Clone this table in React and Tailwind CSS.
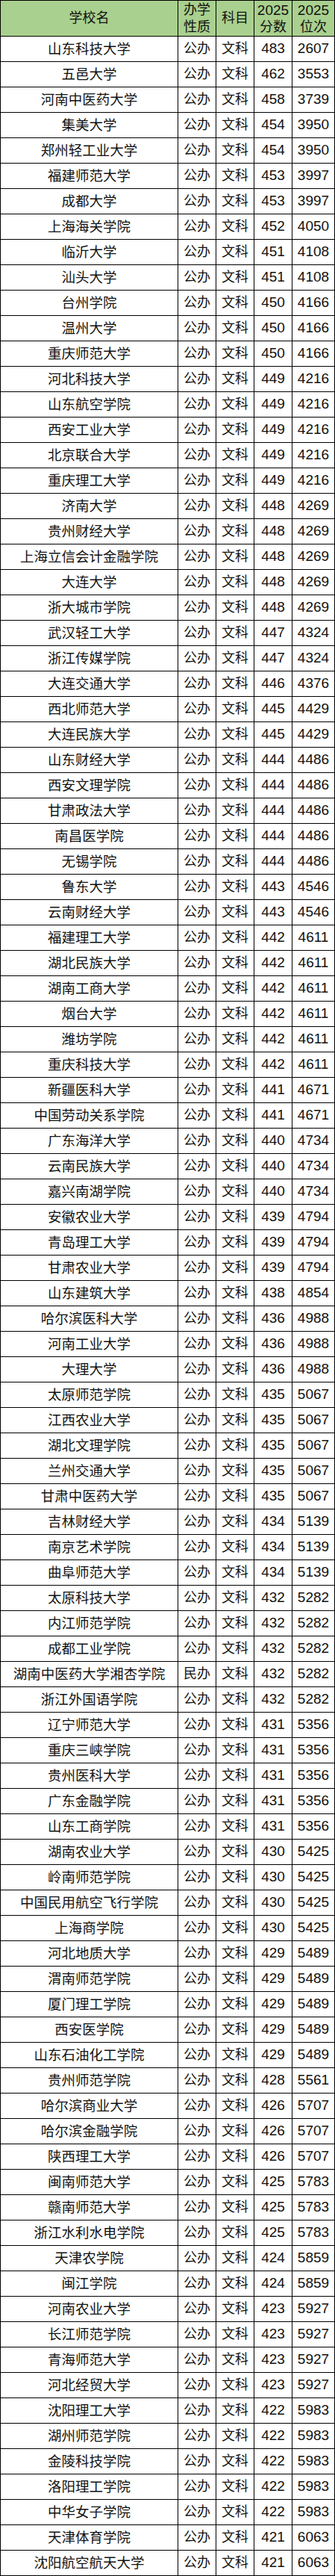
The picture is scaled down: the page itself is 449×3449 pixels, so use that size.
import React from "react";

const rows = [
  ["山东科技大学", "公办", 483, 2607],
  ["五邑大学", "公办", 462, 3553],
  ["河南中医药大学", "公办", 458, 3739],
  ["集美大学", "公办", 454, 3950],
  ["郑州轻工业大学", "公办", 454, 3950],
  ["福建师范大学", "公办", 453, 3997],
  ["成都大学", "公办", 453, 3997],
  ["上海海关学院", "公办", 452, 4050],
  ["临沂大学", "公办", 451, 4108],
  ["汕头大学", "公办", 451, 4108],
  ["台州学院", "公办", 450, 4166],
  ["温州大学", "公办", 450, 4166],
  ["重庆师范大学", "公办", 450, 4166],
  ["河北科技大学", "公办", 449, 4216],
  ["山东航空学院", "公办", 449, 4216],
  ["西安工业大学", "公办", 449, 4216],
  ["北京联合大学", "公办", 449, 4216],
  ["重庆理工大学", "公办", 449, 4216],
  ["济南大学", "公办", 448, 4269],
  ["贵州财经大学", "公办", 448, 4269],
  ["上海立信会计金融学院", "公办", 448, 4269],
  ["大连大学", "公办", 448, 4269],
  ["浙大城市学院", "公办", 448, 4269],
  ["武汉轻工大学", "公办", 447, 4324],
  ["浙江传媒学院", "公办", 447, 4324],
  ["大连交通大学", "公办", 446, 4376],
  ["西北师范大学", "公办", 445, 4429],
  ["大连民族大学", "公办", 445, 4429],
  ["山东财经大学", "公办", 444, 4486],
  ["西安文理学院", "公办", 444, 4486],
  ["甘肃政法大学", "公办", 444, 4486],
  ["南昌医学院", "公办", 444, 4486],
  ["无锡学院", "公办", 444, 4486],
  ["鲁东大学", "公办", 443, 4546],
  ["云南财经大学", "公办", 443, 4546],
  ["福建理工大学", "公办", 442, 4611],
  ["湖北民族大学", "公办", 442, 4611],
  ["湖南工商大学", "公办", 442, 4611],
  ["烟台大学", "公办", 442, 4611],
  ["潍坊学院", "公办", 442, 4611],
  ["重庆科技大学", "公办", 442, 4611],
  ["新疆医科大学", "公办", 441, 4671],
  ["中国劳动关系学院", "公办", 441, 4671],
  ["广东海洋大学", "公办", 440, 4734],
  ["云南民族大学", "公办", 440, 4734],
  ["嘉兴南湖学院", "公办", 440, 4734],
  ["安徽农业大学", "公办", 439, 4794],
  ["青岛理工大学", "公办", 439, 4794],
  ["甘肃农业大学", "公办", 439, 4794],
  ["山东建筑大学", "公办", 438, 4854],
  ["哈尔滨医科大学", "公办", 436, 4988],
  ["河南工业大学", "公办", 436, 4988],
  ["大理大学", "公办", 436, 4988],
  ["太原师范学院", "公办", 435, 5067],
  ["江西农业大学", "公办", 435, 5067],
  ["湖北文理学院", "公办", 435, 5067],
  ["兰州交通大学", "公办", 435, 5067],
  ["甘肃中医药大学", "公办", 435, 5067],
  ["吉林财经大学", "公办", 434, 5139],
  ["南京艺术学院", "公办", 434, 5139],
  ["曲阜师范大学", "公办", 434, 5139],
  ["太原科技大学", "公办", 432, 5282],
  ["内江师范学院", "公办", 432, 5282],
  ["成都工业学院", "公办", 432, 5282],
  ["湖南中医药大学湘杏学院", "民办", 432, 5282],
  ["浙江外国语学院", "公办", 432, 5282],
  ["辽宁师范大学", "公办", 431, 5356],
  ["重庆三峡学院", "公办", 431, 5356],
  ["贵州医科大学", "公办", 431, 5356],
  ["广东金融学院", "公办", 431, 5356],
  ["山东工商学院", "公办", 431, 5356],
  ["湖南农业大学", "公办", 430, 5425],
  ["岭南师范学院", "公办", 430, 5425],
  ["中国民用航空飞行学院", "公办", 430, 5425],
  ["上海商学院", "公办", 430, 5425],
  ["河北地质大学", "公办", 429, 5489],
  ["渭南师范学院", "公办", 429, 5489],
  ["厦门理工学院", "公办", 429, 5489],
  ["西安医学院", "公办", 429, 5489],
  ["山东石油化工学院", "公办", 429, 5489],
  ["贵州师范学院", "公办", 428, 5561],
  ["哈尔滨商业大学", "公办", 426, 5707],
  ["哈尔滨金融学院", "公办", 426, 5707],
  ["陕西理工大学", "公办", 426, 5707],
  ["闽南师范大学", "公办", 425, 5783],
  ["赣南师范大学", "公办", 425, 5783],
  ["浙江水利水电学院", "公办", 425, 5783],
  ["天津农学院", "公办", 424, 5859],
  ["闽江学院", "公办", 424, 5859],
  ["河南农业大学", "公办", 423, 5927],
  ["长江师范学院", "公办", 423, 5927],
  ["青海师范大学", "公办", 423, 5927],
  ["河北经贸大学", "公办", 423, 5927],
  ["沈阳理工大学", "公办", 422, 5983],
  ["湖州师范学院", "公办", 422, 5983],
  ["金陵科技学院", "公办", 422, 5983],
  ["洛阳理工学院", "公办", 422, 5983],
  ["中华女子学院", "公办", 422, 5983],
  ["天津体育学院", "公办", 421, 6063],
  ["沈阳航空航天大学", "公办", 421, 6063],
];

const font = "font-['Liberation_Sans','Noto_Sans_CJK_SC',sans-serif]";
const cell = "flex items-center justify-center border-r border-b border-black text-center";

export default function App() {
  return (
    <div className={`w-[449px] bg-white text-[#111] ${font}`}>
      <div className="grid grid-cols-[238px_51px_51px_51px_57px] border-l border-t border-black">
        {/* header */}
        <div className={`${cell} h-[48px] bg-[#a9d08e] text-[18px]`}>学校名</div>
        <div className={`${cell} h-[48px] bg-[#a9d08e] flex-col text-[18px] leading-[23px]`}>
          <span>办学</span>
          <span>性质</span>
        </div>
        <div className={`${cell} h-[48px] bg-[#a9d08e] text-[18px]`}>科目</div>
        <div className={`${cell} h-[48px] bg-[#a9d08e] flex-col text-[19px] leading-[23px]`}>
          <span>2025</span>
          <span className="text-[18px]">分数</span>
        </div>
        <div className={`${cell} h-[48px] bg-[#a9d08e] flex-col text-[19px] leading-[23px]`}>
          <span>2025</span>
          <span className="text-[18px]">位次</span>
        </div>

        {rows.map(([name, type, score, rank], i) => (
          <React.Fragment key={i}>
            <div className={`${cell} h-[34px] text-[18.5px]`}>{name}</div>
            <div className={`${cell} h-[34px] text-[18px]`}>{type}</div>
            <div className={`${cell} h-[34px] text-[18px]`}>文科</div>
            <div className={`${cell} h-[34px] text-[19px]`}>{score}</div>
            <div className={`${cell} h-[34px] text-[19px]`}>{rank}</div>
          </React.Fragment>
        ))}
      </div>
    </div>
  );
}
